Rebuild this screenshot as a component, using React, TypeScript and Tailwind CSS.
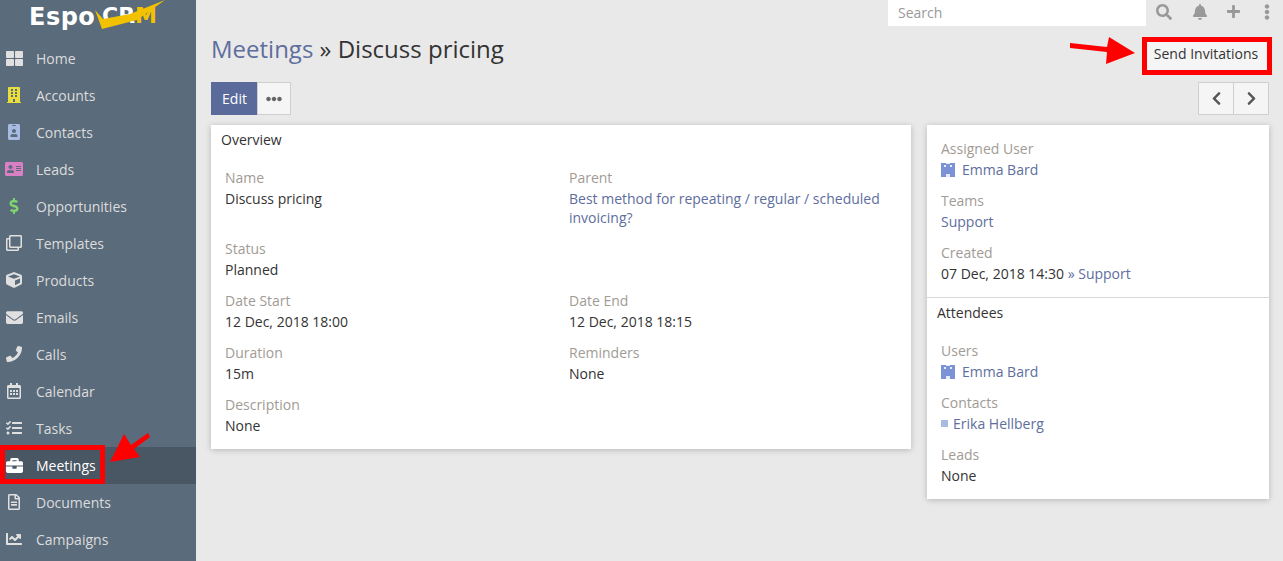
import type { ReactNode } from "react";
import {
  FaThLarge,
  FaBuilding,
  FaIdBadge,
  FaAddressCard,
  FaDollarSign,
  FaRegClone,
  FaCube,
  FaEnvelope,
  FaPhone,
  FaRegCalendarAlt,
  FaTasks,
  FaBriefcase,
  FaRegFileAlt,
  FaChartLine,
  FaSearch,
  FaBell,
  FaPlus,
  FaEllipsisV,
  FaEllipsisH,
  FaChevronLeft,
  FaChevronRight,
} from "react-icons/fa";

const navItems = [
  { label: "Home", icon: <FaThLarge size={17} />, color: "text-[#e0e0e0]" },
  { label: "Accounts", icon: <FaBuilding size={16} />, color: "text-[#e8dd3c]" },
  { label: "Contacts", icon: <FaIdBadge size={16} />, color: "text-[#a8bbe3]" },
  { label: "Leads", icon: <FaAddressCard size={18} />, color: "text-[#d97fc4]" },
  { label: "Opportunities", icon: <FaDollarSign size={16} />, color: "text-[#7fd46f]" },
  { label: "Templates", icon: <FaRegClone size={16} />, color: "text-[#e0e0e0]" },
  { label: "Products", icon: <FaCube size={16} />, color: "text-[#e0e0e0]" },
  { label: "Emails", icon: <FaEnvelope size={17} />, color: "text-[#e0e0e0]" },
  { label: "Calls", icon: <FaPhone size={16} />, color: "text-[#e0e0e0]" },
  { label: "Calendar", icon: <FaRegCalendarAlt size={16} />, color: "text-[#e0e0e0]" },
  { label: "Tasks", icon: <FaTasks size={16} />, color: "text-[#e0e0e0]" },
  { label: "Meetings", icon: <FaBriefcase size={17} />, color: "text-white", active: true },
  { label: "Documents", icon: <FaRegFileAlt size={16} />, color: "text-[#e0e0e0]" },
  { label: "Campaigns", icon: <FaChartLine size={16} />, color: "text-[#e0e0e0]" },
];

function Logo() {
  return (
    <div className="relative h-[39px] text-white leading-none font-['DejaVu_Sans',sans-serif] font-bold">
      <span className="absolute left-[29px] top-[3px] text-[24px] leading-[28px] tracking-[0.5px]">Espo</span>
      <span className="absolute left-[102px] top-[2px] text-[22px] leading-[28px]">
        CR<span className="text-[#f2c200]">M</span>
      </span>
      <svg className="absolute left-[92px] top-0" width="76" height="32" viewBox="0 0 76 32">
        <path d="M3 10 L11 19 L38 14 L73 0 L45 20 L10 29 Z" fill="#f2c200" />
      </svg>
    </div>
  );
}

function Avatar() {
  return (
    <svg width="14" height="14" viewBox="0 0 14 14" className="shrink-0">
      <rect width="14" height="14" fill="#7b93d6" />
      <rect x="3" y="2" width="2" height="2" fill="#e6ebf7" />
      <rect x="9" y="2" width="2" height="2" fill="#e6ebf7" />
      <rect x="5" y="0" width="4" height="1" fill="#e6ebf7" />
      <rect x="5" y="11" width="4" height="3" fill="#e6ebf7" />
    </svg>
  );
}

function Field({ label, children, className }: { label: string; children: ReactNode; className?: string }) {
  return (
    <div className={`mb-[11px] ${className ?? ""}`}>
      <div className="h-[22px] leading-[21px] text-[#a19b95]">{label}</div>
      <div className="leading-[19px] min-h-[19px] text-[#333]">{children}</div>
    </div>
  );
}

function Link({ children }: { children: ReactNode }) {
  return <span className="text-[#5e6e9e]">{children}</span>;
}

function UserLink() {
  return (
    <span className="flex items-center gap-[7px]">
      <Avatar />
      <Link>Emma Bard</Link>
    </span>
  );
}

export default function App() {
  return (
    <div className="relative flex h-[561px] overflow-hidden bg-[#e9e9e9] text-[14px] text-[#333] font-['Open_Sans',sans-serif]">
      <aside className="w-[196px] shrink-0 bg-[#5a6b7b]">
        <Logo />
        <nav className="pt-[0.5px]">
          {navItems.map((item) => (
            <div
              key={item.label}
              className={`flex h-[37px] items-center ${item.active ? "bg-[#495663] text-white" : "text-[#dcdcdc]"}`}
            >
              <span className={`flex w-[36px] justify-center pr-[8px] ${item.color}`}>{item.icon}</span>
              <span>{item.label}</span>
            </div>
          ))}
        </nav>
      </aside>

      <main className="flex-1 min-w-0 pl-[15px] pr-[14px]">
        <div className="flex h-[26px] items-start justify-end -mr-[14px]">
          <div className="h-[26px] w-[258px] bg-white pl-[10px] leading-[26px] text-[#999]">Search</div>
          <div className="flex h-[26px] w-[137px] items-center pb-[3px] text-[#999]">
            <FaSearch size={16} className="ml-[10px]" />
            <FaBell size={16} className="ml-[20px]" />
            <FaPlus size={15} className="ml-[18px]" />
            <FaEllipsisV size={16} className="ml-[18px]" />
          </div>
        </div>

        <div className="flex h-[56px] items-center justify-between">
          <h1 className="text-[24px] leading-[48px] -mt-[10px]">
            <span className="text-[#5e6e9e]">Meetings</span> » Discuss pricing
          </h1>
          <button className="mt-[4px] h-[30px] w-[126px] border border-[#cfcfcf] bg-[#f5f5f5] pb-[6px] text-[#333]">
            Send Invitations
          </button>
        </div>

        <div className="flex h-[33px] justify-between">
          <div className="flex">
            <button className="w-[46px] bg-[#5a6a9a] pl-[1px] text-white">Edit</button>
            <button className="flex w-[34px] items-center justify-center border border-[#cfcfcf] bg-[#f5f5f5] text-[#666]">
              <FaEllipsisH size={16} />
            </button>
          </div>
          <div className="flex text-[#555]">
            <button className="flex w-[36px] items-center justify-center border border-[#cfcfcf] bg-[#f5f5f5]">
              <FaChevronLeft size={15} />
            </button>
            <button className="-ml-px flex w-[36px] items-center justify-center border border-[#cfcfcf] bg-[#f5f5f5]">
              <FaChevronRight size={15} />
            </button>
          </div>
        </div>

        <div className="mt-[10px] flex items-start gap-[16px]">
          <section className="h-[324px] w-[700px] bg-white shadow-[0_1px_6px_rgba(0,0,0,0.22)]">
            <div className="h-[41px] px-[10px] pt-[4px] leading-[21px]">Overview</div>
            <div className="grid grid-cols-[344px_320px] px-[14px] pt-[1px]">
              <Field label="Name">Discuss pricing</Field>
              <Field label="Parent">
                <Link>Best method for repeating / regular / scheduled invoicing?</Link>
              </Field>
              <Field label="Status" className="col-span-2">Planned</Field>
              <Field label="Date Start">12 Dec, 2018 18:00</Field>
              <Field label="Date End">12 Dec, 2018 18:15</Field>
              <Field label="Duration">15m</Field>
              <Field label="Reminders">None</Field>
              <Field label="Description" className="col-span-2">None</Field>
            </div>
          </section>

          <section className="h-[374px] w-[342px] bg-white shadow-[0_1px_6px_rgba(0,0,0,0.22)]">
            <div className="h-[173px] border-b border-[#d8d8d8] px-[14px] pt-[13px]">
              <Field label="Assigned User"><UserLink /></Field>
              <Field label="Teams"><Link>Support</Link></Field>
              <Field label="Created">
                07 Dec, 2018 14:30 <Link>» Support</Link>
              </Field>
            </div>
            <div className="h-[41px] px-[10px] pt-[4px] leading-[21px]">Attendees</div>
            <div className="px-[14px] pt-[1px]">
              <Field label="Users"><UserLink /></Field>
              <Field label="Contacts">
                <span className="flex items-center gap-[5px]">
                  <span className="h-[7px] w-[7px] bg-[#a8bbe3]" />
                  <Link>Erika Hellberg</Link>
                </span>
              </Field>
              <Field label="Leads">None</Field>
            </div>
          </section>
        </div>
      </main>

      {/* annotations */}
      <div className="absolute left-0 top-[445px] h-[39px] w-[105px] border-[5px] border-[#f00]" />
      <div className="absolute left-[1142px] top-[37px] h-[38px] w-[130px] border-[5px] border-[#f00]" />
      <svg className="absolute left-[1068px] top-[34px]" width="74" height="34" viewBox="0 0 74 34">
        <path d="M2 9 L39 13 L41 3 L67 19 L38 30 L39 18 L2 14 Z" fill="#f00" />
      </svg>
      <svg className="absolute left-[106px] top-[430px]" width="46" height="36" viewBox="0 0 46 36">
        <path d="M4 32 L18 4 L25 15 L42 3 L44 7 L28 19 L34 27 Z" fill="#f00" />
      </svg>
    </div>
  );
}
